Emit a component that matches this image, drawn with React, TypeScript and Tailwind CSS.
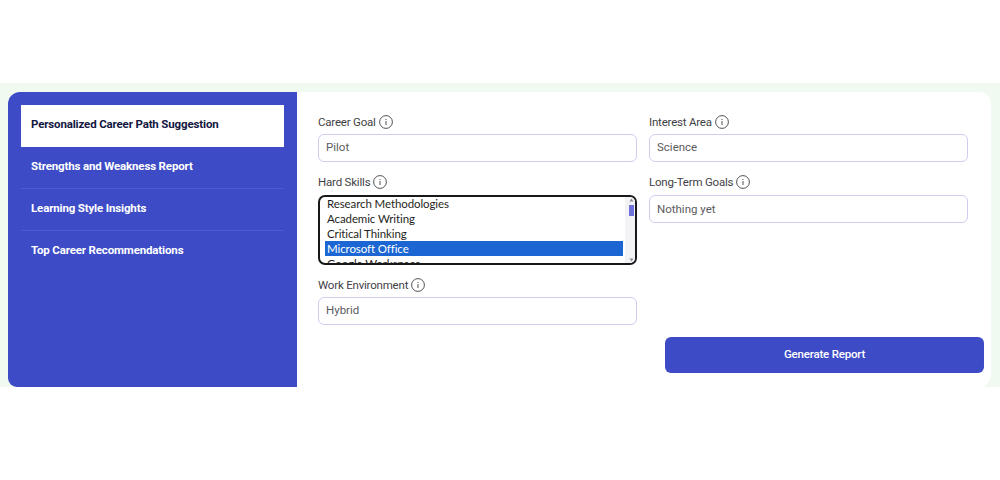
const navItems = [
  'Personalized Career Path Suggestion',
  'Strengths and Weakness Report',
  'Learning Style Insights',
  'Top Career Recommendations',
];

const skills = ['Research Methodologies', 'Academic Writing', 'Critical Thinking', 'Microsoft Office', 'Google Workspace'];

const InfoIcon = () => (
  <svg width="14" height="14" viewBox="0 0 14 14" fill="none" className="shrink-0">
    <circle cx="7" cy="7" r="6.4" stroke="#3f3f46" strokeWidth="0.9" />
    <rect x="6.55" y="6" width="0.9" height="4" fill="#3f3f46" />
    <rect x="6.55" y="4" width="0.9" height="1" fill="#3f3f46" />
  </svg>
);

const Label = ({ text }: { text: string }) => (
  <div className="flex items-center gap-[3px] h-[14px] text-[11.5px] leading-[14px] text-[#3f3f46] tracking-[-0.2px]">
    <span>{text}</span>
    <InfoIcon />
  </div>
);

const Field = ({ label, value, tight }: { label: string; value: string; tight?: boolean }) => (
  <div className={tight ? 'flex flex-col gap-[5px]' : 'flex flex-col gap-[6px]'}>
    <Label text={label} />
    <div
      className={
        tight
          ? 'h-[28px] flex items-center px-[7px] rounded-[6px] border border-[#cfcdf0] bg-white text-[11.5px] text-[#5b5b60]'
          : 'h-[28px] flex items-center px-[7px] pt-[2px] rounded-[6px] border border-[#cfcdf0] bg-white text-[11.5px] text-[#5b5b60]'
      }
    >
      {value}
    </div>
  </div>
);

export default function App() {
  return (
    <div className="h-[480px] bg-white font-['Roboto',sans-serif] pt-[83px]">
      <div className="h-[304px] bg-[#f1faf1] pt-[9px] pl-[8px] pr-[9px]">
        <div className="flex h-[295px]">
          <aside className="w-[289px] shrink-0 bg-[#3d4cc6] rounded-tl-[12px] rounded-bl-[9px] pt-[13px] px-[13px]">
            <nav className="w-[263px] flex flex-col">
              {navItems.map((item, i) => (
                <div
                  key={item}
                  className={
                    i === 0
                      ? 'h-[42px] flex items-center px-[10px] pb-[2px] bg-white text-[#12173f] text-[11.5px] font-bold tracking-[-0.15px]'
                      : i === 3
                        ? 'h-[42px] flex items-center px-[10px] pb-[2px] text-white text-[11.5px] font-bold tracking-[-0.15px]'
                        : 'h-[42px] flex items-center px-[10px] pb-[2px] border-b border-[#4d5bd0] text-white text-[11.5px] font-bold tracking-[-0.15px]'
                  }
                >
                  {item}
                </div>
              ))}
            </nav>
          </aside>
          <main className="flex-1 bg-white rounded-tr-[12px] rounded-br-[12px] pt-[23px] pl-[21px] pr-[7px] flex flex-col">
            <div className="grid grid-cols-[319px_319px] gap-x-[12px]">
              <div className="flex flex-col">
                <Field tight label="Career Goal" value="Pilot" />
                <div className="flex flex-col gap-[6px] mt-[13px]">
                  <Label text="Hard Skills" />
                  <div className="relative h-[70px] rounded-[7px] border-2 border-[#18181b] bg-white overflow-hidden pl-[5px] font-['Lato',sans-serif] text-[11.5px] tracking-[-0.1px] leading-[15px] text-[#1f1f23]">
                    <div className="-mt-[1px]">
                      {skills.map((s, i) => (
                        <div key={s} className={i === 3 ? 'w-[298px] h-[15px] px-[2px] bg-[#1b66d2] text-white' : 'h-[15px] px-[2px]'}>
                          {s}
                        </div>
                      ))}
                    </div>
                    {/* scrollbar */}
                    <div className="absolute right-0 top-0 bottom-0 w-[10px] bg-[#f3f3f6]">
                      <svg width="5" height="4" viewBox="0 0 5 4" className="absolute top-[1px] right-[1px]">
                        <path d="M2.5 0.5 L4.5 3.5 L0.5 3.5 Z" fill="#8a8a94" />
                      </svg>
                      <div className="absolute top-[8px] right-[1px] w-[5px] h-[11px] bg-[#6f72d8]" />
                      <svg width="5" height="4" viewBox="0 0 5 4" className="absolute bottom-[1px] right-[1px]">
                        <path d="M2.5 3.5 L4.5 0.5 L0.5 0.5 Z" fill="#8a8a94" />
                      </svg>
                    </div>
                  </div>
                </div>
                <div className="mt-[13px]">
                  <Field tight label="Work Environment" value="Hybrid" />
                </div>
              </div>
              <div className="flex flex-col gap-[13px]">
                <Field tight label="Interest Area" value="Science" />
                <Field label="Long-Term Goals" value="Nothing yet" />
              </div>
            </div>
            <button className="self-end w-[319px] h-[36px] mt-[12px] rounded-[6px] bg-[#3d4cc6] text-white text-[11.5px] font-medium tracking-[-0.2px]">
              Generate Report
            </button>
          </main>
        </div>
      </div>
    </div>
  );
}
